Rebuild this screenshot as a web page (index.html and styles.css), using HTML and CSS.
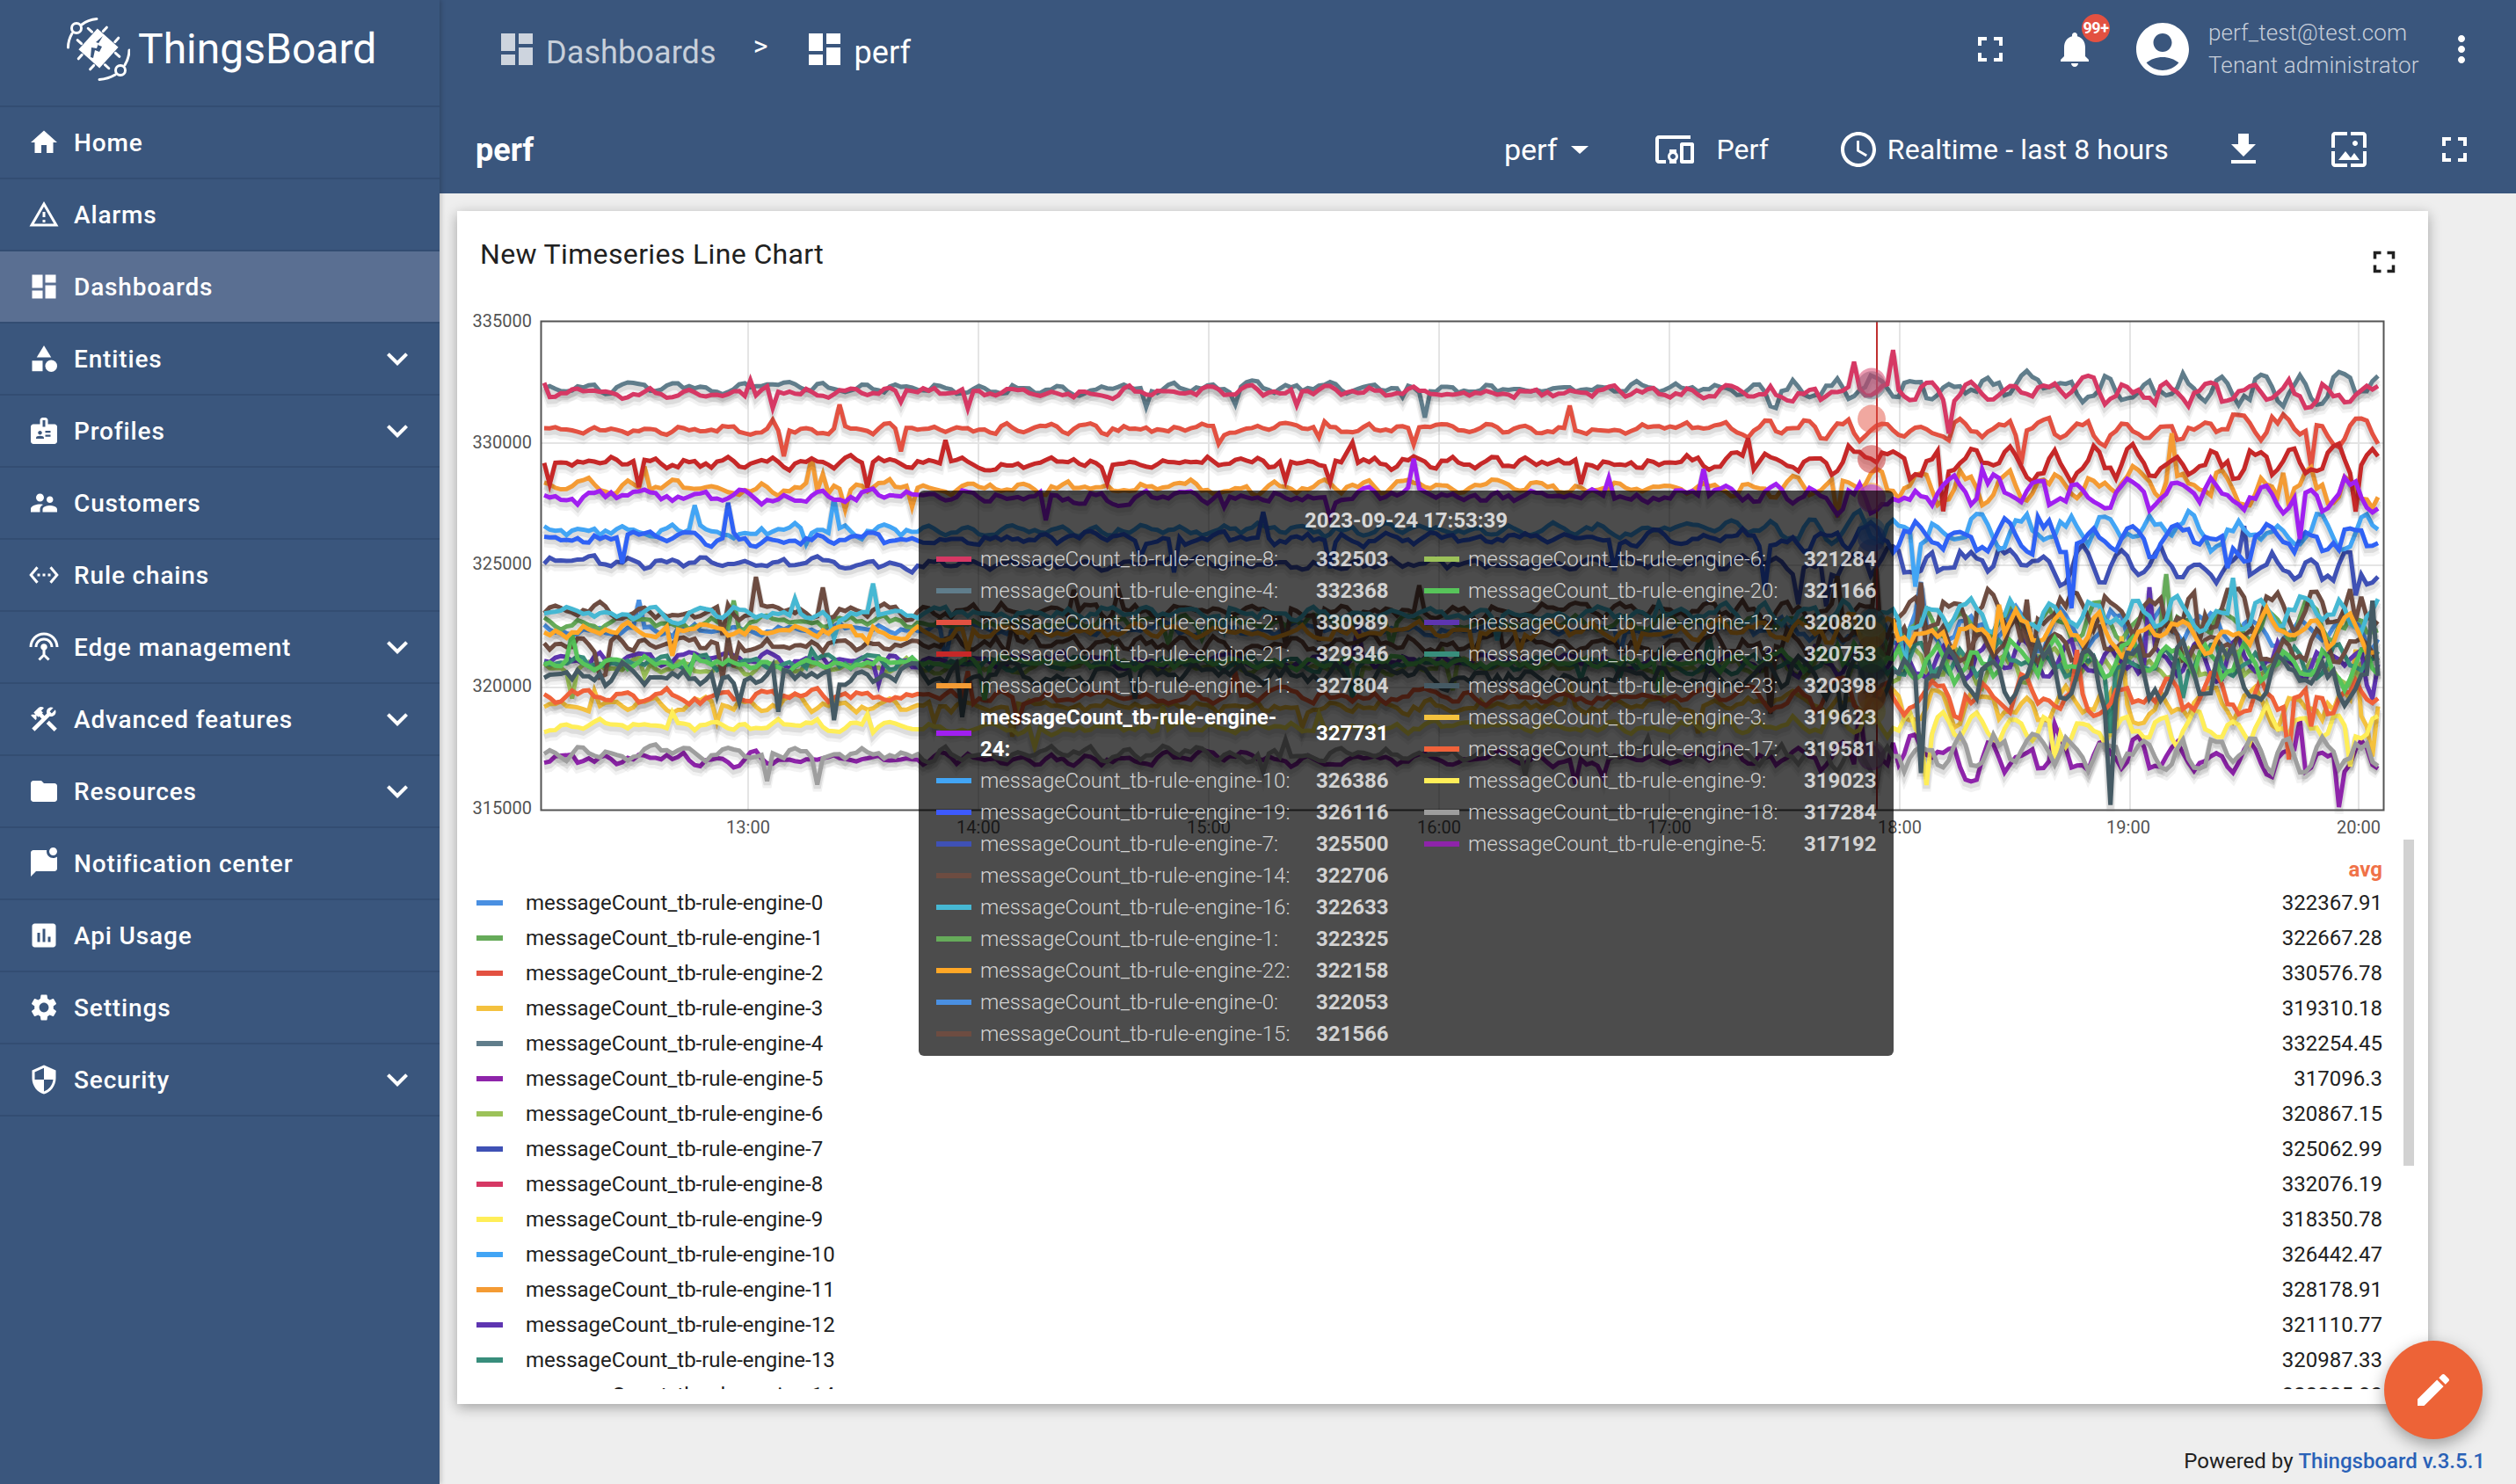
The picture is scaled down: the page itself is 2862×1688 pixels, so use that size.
FILE: index.html
```html
<!DOCTYPE html>
<html lang="en">
<head>
<meta charset="utf-8">
<title>ThingsBoard | perf</title>
<link rel="stylesheet" href="styles.css">
</head>
<body>
<div class="app">
  <aside class="sidebar">
    <div class="brand">
      <svg class="logo" viewBox="0 0 72 72">
        <g fill="none" stroke="#fff" stroke-width="3" stroke-linecap="round">
          <circle cx="11" cy="12" r="5.5"/><circle cx="61" cy="60" r="5.5"/>
          <path d="M1.5 34C1.5 28 3 23 6 18M17 8C22 4 28 2 34 1.5M71 37c0 6-2 12-5 17M55 65c-5 3-11 5-18 5.500"/>
          <g transform="rotate(42 36 35)"><path d="M27 11v6M45 11v6M27 53v6M45 53v6M12 26h6M12 44h6M54 26h6M54 44h6"/></g>
        </g>
        <rect x="20" y="19" width="32" height="32" fill="#fff" transform="rotate(42 36 35)"/>
        <path d="M41 21l-6 10 5 2-3 6-5-2-2 9-3-1 1-11 6 1 2-6-3-1z" fill="#3a567d"/>
      </svg>
      <span class="brand-name">ThingsBoard</span>
    </div>
    <nav class="menu">
      <a class="item"><svg class="ico" viewBox="0 0 24 24"><path d="M10 20v-6h4v6h5v-8h3L12 3 2 12h3v8z"/></svg><span class="lbl">Home</span></a>
      <a class="item"><svg class="ico" viewBox="0 0 24 24"><path d="M12 5.990L19.530 19H4.470L12 5.990M12 2L1 21h22L12 2zm1 14h-2v2h2v-2zm0-6h-2v4h2v-4z"/></svg><span class="lbl">Alarms</span></a>
      <a class="item active"><svg class="ico" viewBox="0 0 24 24"><path d="M3 13h8V3H3v10zm0 8h8v-6H3v6zm10 0h8V11h-8v10zm0-18v6h8V3h-8z"/></svg><span class="lbl">Dashboards</span></a>
      <a class="item"><svg class="ico" viewBox="0 0 24 24"><path d="M12 2l-5.500 9h11z"/><circle cx="17.500" cy="17.500" r="4.500"/><path d="M3 13.500h8v8H3z"/></svg><span class="lbl">Entities</span><svg class="chev" viewBox="0 0 24 24"><path d="M16.590 8.590L12 13.170 7.410 8.590 6 10l6 6 6-6z"/></svg></a>
      <a class="item"><svg class="ico" viewBox="0 0 24 24"><path d="M20 7h-5V4c0-1.100-.9-2-2-2h-2c-1.100 0-2 .9-2 2v3H4c-1.100 0-2 .9-2 2v11c0 1.100.9 2 2 2h16c1.100 0 2-.9 2-2V9c0-1.100-.9-2-2-2zM9 12c.83 0 1.500.67 1.500 1.500S9.830 15 9 15s-1.500-.67-1.500-1.500S8.170 12 9 12zm3 6H6v-.43c0-.6.36-1.150.92-1.390.64-.28 1.340-.43 2.080-.43s1.440.15 2.080.43c.55.24.92.78.92 1.390V18zm1-9h-2V4h2v5zm4 7.500h-4V15h4v1.500zm0-3h-4V12h4v1.500z"/></svg><span class="lbl">Profiles</span><svg class="chev" viewBox="0 0 24 24"><path d="M16.590 8.590L12 13.170 7.410 8.590 6 10l6 6 6-6z"/></svg></a>
      <a class="item"><svg class="ico" viewBox="0 0 24 24"><path d="M16.500 12c1.380 0 2.490-1.120 2.490-2.500S17.880 7 16.500 7C15.120 7 14 8.120 14 9.500s1.120 2.500 2.500 2.500zM9 11c1.660 0 2.990-1.340 2.990-3S10.660 5 9 5C7.340 5 6 6.340 6 8s1.340 3 3 3zm7.500 3c-1.830 0-5.500.92-5.500 2.750V19h11v-2.250c0-1.830-3.670-2.750-5.500-2.750zM9 13c-2.330 0-7 1.170-7 3.500V19h7v-2.250c0-.85.33-2.340 2.370-3.470C10.500 13.100 9.660 13 9 13z"/></svg><span class="lbl">Customers</span></a>
      <a class="item"><svg class="ico" viewBox="0 0 24 24"><path d="M7.770 6.760L6.230 5.480.82 12l5.410 6.520 1.540-1.280L3.420 12l4.350-5.240zM7 13h2v-2H7v2zm10-2h-2v2h2v-2zm-6 2h2v-2h-2v2zm6.770-7.520l-1.540 1.280L20.580 12l-4.350 5.240 1.540 1.280L23.180 12l-5.410-6.520z"/></svg><span class="lbl">Rule chains</span></a>
      <a class="item"><svg class="ico" viewBox="0 0 24 24"><path d="M12 5c-3.870 0-7 3.130-7 7h2c0-2.760 2.240-5 5-5s5 2.240 5 5h2c0-3.870-3.130-7-7-7zm1 9.290c.88-.39 1.500-1.260 1.500-2.290 0-1.380-1.120-2.500-2.500-2.500S9.500 10.620 9.500 12c0 1.020.62 1.900 1.500 2.290v3.300L7.590 21 9 22.410l3-3 3 3L16.410 21 13 17.590v-3.300zM12 1C5.930 1 1 5.930 1 12h2c0-4.970 4.030-9 9-9s9 4.030 9 9h2c0-6.070-4.930-11-11-11z"/></svg><span class="lbl">Edge management</span><svg class="chev" viewBox="0 0 24 24"><path d="M16.590 8.590L12 13.170 7.410 8.590 6 10l6 6 6-6z"/></svg></a>
      <a class="item"><svg class="ico" viewBox="0 0 24 24"><path d="M13.780 15.300l6 6 2.110-2.160-6-6-2.110 2.160zM17.500 10c1.930 0 3.500-1.570 3.500-3.500 0-.58-.16-1.120-.41-1.600l-2.700 2.700-1.490-1.490 2.700-2.700c-.48-.25-1.020-.41-1.600-.41C15.570 3 14 4.570 14 6.500c0 .41.08.8.21 1.160l-1.850 1.850-1.780-1.780.71-.71-1.410-1.410L12 3.490c-1.170-1.170-3.070-1.170-4.240 0L4.220 7.030l1.410 1.410H2.810l-.71.71 3.540 3.540.71-.71V9.150l1.410 1.410.71-.71 1.780 1.780-7.410 7.410 2.120 2.120L16.340 9.790c.36.13.75.21 1.160.21z"/></svg><span class="lbl">Advanced features</span><svg class="chev" viewBox="0 0 24 24"><path d="M16.590 8.590L12 13.170 7.410 8.590 6 10l6 6 6-6z"/></svg></a>
      <a class="item"><svg class="ico" viewBox="0 0 24 24"><path d="M10 4H4c-1.100 0-1.990.9-1.990 2L2 18c0 1.100.9 2 2 2h16c1.100 0 2-.9 2-2V8c0-1.100-.9-2-2-2h-8l-2-2z"/></svg><span class="lbl">Resources</span><svg class="chev" viewBox="0 0 24 24"><path d="M16.590 8.590L12 13.170 7.410 8.590 6 10l6 6 6-6z"/></svg></a>
      <a class="item"><svg class="ico" viewBox="0 0 24 24"><path d="M22 6.980V16c0 1.100-.9 2-2 2H6l-4 4V4c0-1.100.9-2 2-2h10.100c-.06.32-.1.66-.1 1 0 2.760 2.240 5 5 5 1.130 0 2.160-.39 3-1.020zM16 3c0 1.660 1.340 3 3 3s3-1.340 3-3-1.340-3-3-3-3 1.340-3 3z"/></svg><span class="lbl">Notification center</span></a>
      <a class="item"><svg class="ico" viewBox="0 0 24 24"><path d="M19 3H5c-1.100 0-2 .9-2 2v14c0 1.100.9 2 2 2h14c1.100 0 2-.9 2-2V5c0-1.100-.9-2-2-2zM9 17H7v-7h2v7zm4 0h-2V7h2v10zm4 0h-2v-4h2v4z"/></svg><span class="lbl">Api Usage</span></a>
      <a class="item"><svg class="ico" viewBox="0 0 24 24"><path d="M19.140 12.940c.04-.3.06-.61.06-.94 0-.32-.02-.64-.07-.94l2.030-1.580c.18-.14.23-.41.12-.61l-1.920-3.320c-.12-.22-.37-.29-.59-.22l-2.390.96c-.5-.38-1.030-.7-1.620-.94l-.36-2.540c-.04-.24-.24-.41-.48-.41h-3.840c-.24 0-.43.17-.47.41l-.36 2.540c-.59.24-1.130.57-1.620.94l-2.390-.96c-.22-.08-.47 0-.59.22L2.740 8.870c-.12.21-.08.47.12.61l2.030 1.580c-.05.3-.09.63-.09.94s.02.64.07.94l-2.030 1.580c-.18.14-.23.41-.12.61l1.920 3.320c.12.22.37.29.59.22l2.390-.96c.5.38 1.030.7 1.620.94l.36 2.540c.05.24.24.41.48.41h3.840c.24 0 .44-.17.47-.41l.36-2.540c.59-.24 1.130-.56 1.620-.94l2.390.96c.22.08.47 0 .59-.22l1.920-3.320c.12-.22.07-.47-.12-.61l-2.010-1.580zM12 15.600c-1.980 0-3.600-1.620-3.600-3.600s1.620-3.600 3.600-3.600 3.600 1.620 3.600 3.600-1.620 3.600-3.600 3.600z"/></svg><span class="lbl">Settings</span></a>
      <a class="item"><svg class="ico" viewBox="0 0 24 24"><path d="M12 1L3 5v6c0 5.550 3.840 10.740 9 12 5.160-1.260 9-6.450 9-12V5l-9-4zm0 10.990h7c-.53 4.120-3.280 7.790-7 8.940V12H5V6.300l7-3.110v8.800z"/></svg><span class="lbl">Security</span><svg class="chev" viewBox="0 0 24 24"><path d="M16.590 8.590L12 13.170 7.410 8.590 6 10l6 6 6-6z"/></svg></a>
    </nav>
  </aside>

  <main class="main">
    <header class="header">
      <div class="toprow">
        <svg class="hico dim" viewBox="0 0 24 24"><path d="M3 13h8V3H3v10zm0 8h8v-6H3v6zm10 0h8V11h-8v10zm0-18v6h8V3h-8z"/></svg>
        <span class="crumb dimtext">Dashboards</span>
        <span class="crumb-sep">&gt;</span>
        <svg class="hico" viewBox="0 0 24 24"><path d="M3 13h8V3H3v10zm0 8h8v-6H3v6zm10 0h8V11h-8v10zm0-18v6h8V3h-8z"/></svg>
        <span class="crumb">perf</span>
        <div class="top-actions">
          <svg class="hico" viewBox="0 0 24 24"><path d="M7 14H5v5h5v-2H7v-3zm-2-4h2V7h3V5H5v5zm12 7h-3v2h5v-5h-2v3zM14 5v2h3v3h2V5h-5z"/></svg>
          <div class="bell">
            <svg class="hico" viewBox="0 0 24 24"><path d="M12 22c1.100 0 2-.9 2-2h-4c0 1.100.89 2 2 2zm6-6v-5c0-3.070-1.640-5.640-4.500-6.320V4c0-.83-.67-1.500-1.500-1.500s-1.500.67-1.500 1.500v.68C7.630 5.360 6 7.920 6 11v5l-2 2v1h16v-1l-2-2z"/></svg>
            <span class="badge">99+</span>
          </div>
          <svg class="avatar" viewBox="0 0 24 24"><path d="M12 2C6.480 2 2 6.480 2 12s4.480 10 10 10 10-4.480 10-10S17.520 2 12 2zm0 4c1.930 0 3.500 1.570 3.500 3.500S13.930 13 12 13s-3.500-1.570-3.500-3.500S10.070 6 12 6zm0 14c-2.030 0-4.430-.82-6.140-2.880C7.550 15.800 9.680 15 12 15s4.450.8 6.140 2.120C16.430 19.180 14.030 20 12 20z"/></svg>
          <div class="user">
            <span class="user-name">perf_test@test.com</span>
            <span class="user-role">Tenant administrator</span>
          </div>
          <svg class="hico more" viewBox="0 0 24 24"><path d="M12 8c1.100 0 2-.9 2-2s-.9-2-2-2-2 .9-2 2 .9 2 2 2zm0 2c-1.100 0-2 .9-2 2s.9 2 2 2 2-.9 2-2-.9-2-2-2zm0 6c-1.100 0-2 .9-2 2s.9 2 2 2 2-.9 2-2-.9-2-2-2z"/></svg>
        </div>
      </div>
      <div class="subrow">
        <span class="dash-title">perf</span>
        <div class="sub-actions">
          <span class="sub-text state-name">perf</span><i class="caret"></i>
          <svg class="hico devices" viewBox="0 0 24 24"><path d="M3 6h18V4H3c-1.100 0-2 .9-2 2v12c0 1.100.9 2 2 2h4v-2H3V6zm10 6H9v1.780c-.61.55-1 1.330-1 2.220s.39 1.670 1 2.220V20h4v-1.780c.61-.55 1-1.340 1-2.220s-.39-1.670-1-2.220V12zm-2 5.500c-.83 0-1.500-.67-1.500-1.500s.67-1.500 1.500-1.500 1.500.67 1.500 1.500-.67 1.500-1.500 1.500zM22 8h-6c-.5 0-1 .5-1 1v10c0 .5.5 1 1 1h6c.5 0 1-.5 1-1V9c0-.5-.5-1-1-1zm-1 10h-4v-8h4v8z"/></svg>
          <span class="sub-text perf-state">Perf</span>
          <svg class="hico clock" viewBox="0 0 24 24"><path d="M11.990 2C6.470 2 2 6.480 2 12s4.470 10 9.990 10C17.520 22 22 17.520 22 12S17.520 2 11.990 2zM12 20c-4.420 0-8-3.580-8-8s3.580-8 8-8 8 3.580 8 8-3.580 8-8 8zm.5-13H11v6l5.250 3.150.75-1.230-4.500-2.670z"/></svg>
          <span class="sub-text realtime">Realtime - last 8 hours</span>
          <svg class="hico download" viewBox="0 0 24 24"><path d="M19 9h-4V3H9v6H5l7 7 7-7zM5 18v2h14v-2H5z"/></svg>
          <svg class="hico gap72" viewBox="0 0 24 24"><path d="M4 4h7V2H4c-1.100 0-2 .9-2 2v7h2V4zm6 9l-4 5h12l-3-4-2.030 2.710L10 13zm7-4.500c0-.83-.67-1.500-1.500-1.500S14 7.670 14 8.500s.67 1.500 1.500 1.500S17 9.330 17 8.500zM20 2h-7v2h7v7h2V4c0-1.100-.9-2-2-2zm0 18h-7v2h7c1.100 0 2-.9 2-2v-7h-2v7zM4 13H2v7c0 1.100.9 2 2 2h7v-2H4v-7z"/></svg>
          <svg class="hico gap72" viewBox="0 0 24 24"><path d="M7 14H5v5h5v-2H7v-3zm-2-4h2V7h3V5H5v5zm12 7h-3v2h5v-5h-2v3zM14 5v2h3v3h2V5h-5z"/></svg>
        </div>
      </div>
    </header>

    <section class="content">
      <article class="card">
        <div class="card-head">
          <h2 class="card-title">New Timeseries Line Chart</h2>
          <svg class="card-full" viewBox="0 0 24 24"><path d="M7 14H5v5h5v-2H7v-3zm-2-4h2V7h3V5H5v5zm12 7h-3v2h5v-5h-2v3zM14 5v2h3v3h2V5h-5z"/></svg>
        </div>

        <svg id="plot" class="plot" viewBox="520 340 2242 615" width="2242" height="615">
          <g class="grid">
            <line x1="851" y1="365" x2="851" y2="921"/><line x1="1113" y1="365" x2="1113" y2="921"/><line x1="1375" y1="365" x2="1375" y2="921"/><line x1="1637" y1="365" x2="1637" y2="921"/><line x1="1899" y1="365" x2="1899" y2="921"/><line x1="2161" y1="365" x2="2161" y2="921"/><line x1="2423" y1="365" x2="2423" y2="921"/><line x1="2683" y1="365" x2="2683" y2="921"/>
            <line x1="615" y1="504" x2="2711" y2="504"/><line x1="615" y1="643" x2="2711" y2="643"/><line x1="615" y1="782" x2="2711" y2="782"/>
          </g>
          <g id="series"></g>
          <line class="cross" x1="2135" y1="365" x2="2135" y2="921"/>
          <g id="marks"></g>
          <rect class="frame" x="615.500" y="365.500" width="2096" height="556"/>
          <g class="ytick">
            <text x="605" y="372">335000</text><text x="605" y="510">330000</text><text x="605" y="648">325000</text><text x="605" y="787">320000</text><text x="605" y="926">315000</text>
          </g>
          <g class="xtick">
            <text x="851" y="948">13:00</text><text x="1113" y="948">14:00</text><text x="1375" y="948">15:00</text><text x="1637" y="948">16:00</text><text x="1899" y="948">17:00</text><text x="2161" y="948">18:00</text><text x="2421" y="948">19:00</text><text x="2683" y="948">20:00</text>
          </g>
        </svg>

        <div class="legend">
          <div class="legend-list">
            <div class="legend-head">avg</div>
            <div class="lrow"><i class="sw s0"></i><span class="lname">messageCount_tb-rule-engine-0</span><span class="lval">322367.91</span></div>
            <div class="lrow"><i class="sw s1"></i><span class="lname">messageCount_tb-rule-engine-1</span><span class="lval">322667.28</span></div>
            <div class="lrow"><i class="sw s2"></i><span class="lname">messageCount_tb-rule-engine-2</span><span class="lval">330576.78</span></div>
            <div class="lrow"><i class="sw s3"></i><span class="lname">messageCount_tb-rule-engine-3</span><span class="lval">319310.18</span></div>
            <div class="lrow"><i class="sw s4"></i><span class="lname">messageCount_tb-rule-engine-4</span><span class="lval">332254.45</span></div>
            <div class="lrow"><i class="sw s5"></i><span class="lname">messageCount_tb-rule-engine-5</span><span class="lval">317096.3</span></div>
            <div class="lrow"><i class="sw s6"></i><span class="lname">messageCount_tb-rule-engine-6</span><span class="lval">320867.15</span></div>
            <div class="lrow"><i class="sw s7"></i><span class="lname">messageCount_tb-rule-engine-7</span><span class="lval">325062.99</span></div>
            <div class="lrow"><i class="sw s8"></i><span class="lname">messageCount_tb-rule-engine-8</span><span class="lval">332076.19</span></div>
            <div class="lrow"><i class="sw s9"></i><span class="lname">messageCount_tb-rule-engine-9</span><span class="lval">318350.78</span></div>
            <div class="lrow"><i class="sw s10"></i><span class="lname">messageCount_tb-rule-engine-10</span><span class="lval">326442.47</span></div>
            <div class="lrow"><i class="sw s11"></i><span class="lname">messageCount_tb-rule-engine-11</span><span class="lval">328178.91</span></div>
            <div class="lrow"><i class="sw s12"></i><span class="lname">messageCount_tb-rule-engine-12</span><span class="lval">321110.77</span></div>
            <div class="lrow"><i class="sw s13"></i><span class="lname">messageCount_tb-rule-engine-13</span><span class="lval">320987.33</span></div>
            <div class="lrow"><i class="sw s14"></i><span class="lname">messageCount_tb-rule-engine-14</span><span class="lval">322885.30</span></div>
          </div>
          <div class="thumb"></div>
        </div>

        <div class="tooltip">
          <div class="tip-date">2023-09-24 17:53:39</div>
          <div class="tip-cols">
            <div class="tip-col">
              <div class="trow"><i class="tsw s8"></i><span class="tname">messageCount_tb-rule-engine-8:</span><b class="tval">332503</b></div>
              <div class="trow"><i class="tsw s4"></i><span class="tname">messageCount_tb-rule-engine-4:</span><b class="tval">332368</b></div>
              <div class="trow"><i class="tsw s2"></i><span class="tname">messageCount_tb-rule-engine-2:</span><b class="tval">330989</b></div>
              <div class="trow"><i class="tsw s21"></i><span class="tname">messageCount_tb-rule-engine-21:</span><b class="tval">329346</b></div>
              <div class="trow"><i class="tsw s11"></i><span class="tname">messageCount_tb-rule-engine-11:</span><b class="tval">327804</b></div>
              <div class="trow hot"><i class="tsw s24"></i><span class="tname">messageCount_tb-rule-engine-24:</span><b class="tval">327731</b></div>
              <div class="trow"><i class="tsw s10"></i><span class="tname">messageCount_tb-rule-engine-10:</span><b class="tval">326386</b></div>
              <div class="trow"><i class="tsw s19"></i><span class="tname">messageCount_tb-rule-engine-19:</span><b class="tval">326116</b></div>
              <div class="trow"><i class="tsw s7"></i><span class="tname">messageCount_tb-rule-engine-7:</span><b class="tval">325500</b></div>
              <div class="trow"><i class="tsw s14"></i><span class="tname">messageCount_tb-rule-engine-14:</span><b class="tval">322706</b></div>
              <div class="trow"><i class="tsw s16"></i><span class="tname">messageCount_tb-rule-engine-16:</span><b class="tval">322633</b></div>
              <div class="trow"><i class="tsw s1"></i><span class="tname">messageCount_tb-rule-engine-1:</span><b class="tval">322325</b></div>
              <div class="trow"><i class="tsw s22"></i><span class="tname">messageCount_tb-rule-engine-22:</span><b class="tval">322158</b></div>
              <div class="trow"><i class="tsw s0"></i><span class="tname">messageCount_tb-rule-engine-0:</span><b class="tval">322053</b></div>
              <div class="trow"><i class="tsw s15"></i><span class="tname">messageCount_tb-rule-engine-15:</span><b class="tval">321566</b></div>
            </div>
            <div class="tip-col">
              <div class="trow"><i class="tsw s6"></i><span class="tname">messageCount_tb-rule-engine-6:</span><b class="tval">321284</b></div>
              <div class="trow"><i class="tsw s20"></i><span class="tname">messageCount_tb-rule-engine-20:</span><b class="tval">321166</b></div>
              <div class="trow"><i class="tsw s12"></i><span class="tname">messageCount_tb-rule-engine-12:</span><b class="tval">320820</b></div>
              <div class="trow"><i class="tsw s13"></i><span class="tname">messageCount_tb-rule-engine-13:</span><b class="tval">320753</b></div>
              <div class="trow"><i class="tsw s23"></i><span class="tname">messageCount_tb-rule-engine-23:</span><b class="tval">320398</b></div>
              <div class="trow"><i class="tsw s3"></i><span class="tname">messageCount_tb-rule-engine-3:</span><b class="tval">319623</b></div>
              <div class="trow"><i class="tsw s17"></i><span class="tname">messageCount_tb-rule-engine-17:</span><b class="tval">319581</b></div>
              <div class="trow"><i class="tsw s9"></i><span class="tname">messageCount_tb-rule-engine-9:</span><b class="tval">319023</b></div>
              <div class="trow"><i class="tsw s18"></i><span class="tname">messageCount_tb-rule-engine-18:</span><b class="tval">317284</b></div>
              <div class="trow"><i class="tsw s5"></i><span class="tname">messageCount_tb-rule-engine-5:</span><b class="tval">317192</b></div>
            </div>
          </div>
        </div>
      </article>
      <footer class="powered">Powered by <a class="powered-link">Thingsboard v.3.5.1</a></footer>
    </section>

    <button class="fab" aria-label="Edit"><svg viewBox="0 0 24 24"><path d="M3 17.250V21h3.750L17.810 9.940l-3.750-3.750L3 17.250zM20.710 7.040c.39-.39.39-1.020 0-1.410l-2.340-2.340c-.39-.39-1.020-.39-1.410 0l-1.830 1.830 3.750 3.750 1.830-1.830z"/></svg></button>
  </main>
</div>
<script src="chart.js"></script>
</body>
</html>
```

FILE: styles.css
```css
* { box-sizing: border-box; }
html, body { margin: 0; height: 100%; }
body { font-family: Roboto, "Noto Sans", sans-serif; color: #212121; background: #eee; overflow: hidden; }

.app { display: flex; width: 2862px; height: 1688px; }

/* sidebar */
.sidebar { width: 500px; flex: none; background: #3a567d; color: #fff; position: relative; z-index: 2; box-shadow: 2px 0 5px rgba(0, 0, 0, .18); }
.brand { display: flex; align-items: center; height: 122px; padding: 20px 0 28px 76px; border-bottom: 2px solid #334d72; }
.logo { width: 72px; height: 72px; flex: none; }
.brand-name { margin-left: 9px; font-size: 48px; font-weight: 400; line-height: 1; }
.menu { display: flex; flex-direction: column; }
.item { display: flex; align-items: center; height: 82px; padding-left: 32px; padding-right: 24px; border-bottom: 2px solid #334d72; }
.item.active { background: #5a6f92; }
.ico { width: 36px; height: 36px; fill: #fff; flex: none; }
.lbl { margin-left: 16px; font-size: 28px; font-weight: 500; letter-spacing: .85px; flex: 1; }
.chev { width: 48px; height: 48px; fill: #fff; flex: none; }

/* header */
.main { flex: 1; min-width: 0; display: flex; flex-direction: column; position: relative; }
.header { height: 220px; flex: none; background: #3a567d; color: #fff; }
.toprow { height: 112px; display: flex; align-items: center; padding-left: 64px; padding-right: 38px; }
.hico { width: 48px; height: 48px; fill: #fff; flex: none; display: block; }
.hico.dim { opacity: .75; }
.crumb { font-size: 36px; margin-left: 9px; padding-top: 7px; letter-spacing: .1px; }
.dimtext { color: rgba(255, 255, 255, .72); }
.crumb-sep { font-size: 32px; margin-left: 42px; margin-right: 41px; margin-top: -8px; }
.top-actions { margin-left: auto; display: flex; align-items: center; }
.bell { position: relative; margin-left: 48px; }
.badge { position: absolute; left: 32px; top: -16px; width: 32px; height: 32px; border-radius: 50%; background: #e35141; color: #fff; font-size: 18px; font-weight: 700; line-height: 32px; text-align: center; letter-spacing: -.5px; }
.avatar { width: 72px; height: 72px; fill: #fff; margin-left: 40px; flex: none; }
.user { display: flex; flex-direction: column; margin-left: 16px; width: 264px; gap: 8px; color: rgba(255, 255, 255, .72); font-size: 26px; line-height: 29px; font-weight: 300; letter-spacing: .1px; }
.subrow { height: 108px; display: flex; align-items: center; padding: 8px 46px 0 41px; }
.dash-title { font-size: 36px; font-weight: 700; padding-top: 2px; }
.sub-actions { margin-left: auto; display: flex; align-items: center; }
.sub-text { font-size: 32px; font-weight: 400; }
.state-name { font-size: 34px; }
.realtime { letter-spacing: .15px; }
.caret { width: 0; height: 0; margin-left: 15px; border-left: 10px solid transparent; border-right: 10px solid transparent; border-top: 9px solid #fff; }
.devices { margin-left: 74px; }
.perf-state { margin-left: 24px; }
.clock { margin-left: 78px; margin-right: 9px; }
.download { margin-left: 61px; }
.gap72 { margin-left: 72px; }

/* content */
.content { flex: 1; padding: 20px 35px 0 20px; display: flex; flex-direction: column; }
.card { position: relative; height: 1357px; margin-right: 65px; background: #fff; box-shadow: 0 4px 14px rgba(0, 0, 0, .32); }
.card-head { height: 100px; display: flex; justify-content: space-between; align-items: flex-start; padding: 26px 29px 0 26px; }
.card-title { margin: 0; font-size: 32px; font-weight: 400; line-height: 47px; letter-spacing: .36px; color: #212121; }
.card-full { width: 42px; height: 42px; fill: #212121; margin-top: 11px; }
.plot { display: block; }
.grid line { stroke: #e4e4e4; stroke-width: 2; }
.cross { stroke: #c03030; stroke-width: 2; }
.frame { fill: none; stroke: #545454; stroke-width: 2; }
.ytick text, .xtick text { font-family: Roboto, sans-serif; font-size: 20px; fill: #545454; }
.ytick text { text-anchor: end; }
.xtick text { text-anchor: middle; }

.legend { display: flex; height: 625px; overflow: hidden; padding-left: 22px; }
.legend-list { flex: 1; min-width: 0; }
.legend-head { height: 52px; padding-top: 16px; text-align: right; font-size: 24px; font-weight: 700; line-height: 36px; color: #f07248; }
.lrow { display: flex; align-items: center; height: 40px; font-size: 24px; color: #212121; }
.sw { width: 30px; height: 6px; flex: none; }
.lname { margin-left: 26px; flex: 1; }
.lval { text-align: right; }
.thumb { width: 12px; height: 371px; margin-left: 24px; margin-right: 16px; background: #d2d2d2; flex: none; }

.s0 { background: #4a90e2; } .s1 { background: #66ab5a; } .s2 { background: #e35141; } .s3 { background: #f4c13e; } .s4 { background: #607d8b; }
.s5 { background: #8e24aa; } .s6 { background: #9cc259; } .s7 { background: #3f51b5; } .s8 { background: #d63864; } .s9 { background: #ffee58; }
.s10 { background: #42a5f5; } .s11 { background: #f49b34; } .s12 { background: #5e35b1; } .s13 { background: #388e7c; } .s14 { background: #6d4c41; }
.s15 { background: #6d4c41; } .s16 { background: #46b8d3; } .s17 { background: #f0623a; } .s18 { background: #9e9e9e; } .s19 { background: #3d5afe; }
.s20 { background: #57c45a; } .s21 { background: #c62828; } .s22 { background: #ffa726; } .s23 { background: #455a64; } .s24 { background: #a01ff0; }

/* tooltip */
.tooltip { position: absolute; left: 525px; top: 318px; width: 1109px; height: 643px; padding: 16px 20px 0; background: rgba(0, 0, 0, .7); border-radius: 6px; color: #fff; font-size: 24px; }
.tip-date { text-align: center; font-weight: 700; line-height: 36px; color: rgba(255, 255, 255, .8); margin-bottom: 8px; }
.tip-cols { display: flex; }
.tip-col { flex: none; width: 555px; }
.tip-col + .tip-col { width: 514px; }
.trow { display: flex; align-items: center; min-height: 36px; color: rgba(255, 255, 255, .76); }
.trow.hot { color: #fff; }
.tsw { width: 40px; height: 6px; flex: none; }
.tname { width: 363px; margin-left: 10px; font-weight: 300; line-height: 36px; flex: none; }
.hot .tname { font-weight: 700; }
.tval { margin-left: 19px; font-weight: 700; }

.powered { margin-top: 49px; text-align: right; font-size: 24px; line-height: 32px; }
.powered-link { color: #2a62b8; font-weight: 500; }

.fab { position: absolute; left: 2212px; top: 1525px; width: 112px; height: 112px; padding: 0; border: 0; border-radius: 50%; background: #ed6337; box-shadow: 0 6px 18px rgba(0, 0, 0, .35); display: flex; align-items: center; justify-content: center; }
.fab svg { width: 48px; height: 48px; fill: #fff; }
```

FILE: chart.js
```js
(function () {
  var NS = 'http://www.w3.org/2000/svg';
  var colors = ['#4a90e2','#66ab5a','#e35141','#f4c13e','#607d8b','#8e24aa','#9cc259','#3f51b5','#d63864','#ffee58','#42a5f5','#f49b34','#5e35b1','#388e7c','#6d4c41','#6d4c41','#46b8d3','#f0623a','#9e9e9e','#2f62f5','#57c45a','#c62828','#ffa726','#455a64','#a01ff0'];
  var levels = [322368,322667,330577,319310,332254,317096,320867,325063,332076,318351,326442,328179,321111,320987,323100,321800,323000,319600,317300,326100,321000,329200,322300,320500,327800];
  var hover = [322053,322325,330989,319623,332368,317192,321284,325500,332503,319023,326386,327804,320820,320753,322706,321566,322633,319581,317284,326116,321166,329346,322158,320398,327731];
  var amp = [360,360,290,390,280,360,360,330,280,330,340,350,360,360,420,460,340,380,360,360,380,350,390,600,390];
  var seed = 7321;
  function rnd() { seed = (seed * 16807) % 2147483647; return seed / 2147483647; }
  function yOf(v) { return 365 + (335000 - v) * 0.0278; }
  function smooth(a, b, t) { var u = Math.min(1, Math.max(0, (t - a) / (b - a))); return u * u * (3 - 2 * u); }
  var series = document.getElementById('series');
  var marks = document.getElementById('marks');
  var N = 330, x0 = 619, x1 = 2705;
  colors.forEach(function (color, s) {
    var pts = [], ph = rnd() * 6.28, w = 6.28 / (6.5 + rnd() * 2);
    var prev = 0;
    for (var i = 0; i < N; i++) {
      var t = i / (N - 1);
      var late = 1 + 1.0 * smooth(0.6, 0.76, t);
      var n = 0.5 * (rnd() - 0.5) * 2 + 0.5 * prev;
      prev = n;
      var v = levels[s] + amp[s] * late * (Math.sin(i * w + ph + 0.6 * rnd()) * (0.35 + 0.35 * smooth(0.6, 0.76, t)) + n);
      if (rnd() > 0.975) v += (rnd() > 0.55 ? 1 : -1) * amp[s] * late * (1.5 + rnd() * 2);
      pts.push((x0 + (x1 - x0) * t).toFixed(1) + ',' + yOf(v).toFixed(1));
    }
    var d = pts.join(' ');
    [[7, 10, '.05'], [4, 8, '.09']].forEach(function (sh) {
      var p = document.createElementNS(NS, 'polyline');
      p.setAttribute('points', d);
      p.setAttribute('fill', 'none');
      p.setAttribute('stroke', 'rgba(0,0,0,' + sh[2] + ')');
      p.setAttribute('stroke-width', sh[1]);
      p.setAttribute('transform', 'translate(0,' + sh[0] + ')');
      series.appendChild(p);
    });
    var l = document.createElementNS(NS, 'polyline');
    l.setAttribute('points', d);
    l.setAttribute('fill', 'none');
    l.setAttribute('stroke', color);
    l.setAttribute('stroke-width', 5);
    l.setAttribute('stroke-linejoin', 'miter');
    l.setAttribute('stroke-miterlimit', 4);
    series.appendChild(l);
    var c = document.createElementNS(NS, 'circle');
    c.setAttribute('cx', 2129);
    c.setAttribute('cy', yOf(hover[s]).toFixed(1));
    c.setAttribute('r', 16);
    c.setAttribute('fill', color);
    c.setAttribute('fill-opacity', '.5');
    marks.appendChild(c);
  });
})();
```
